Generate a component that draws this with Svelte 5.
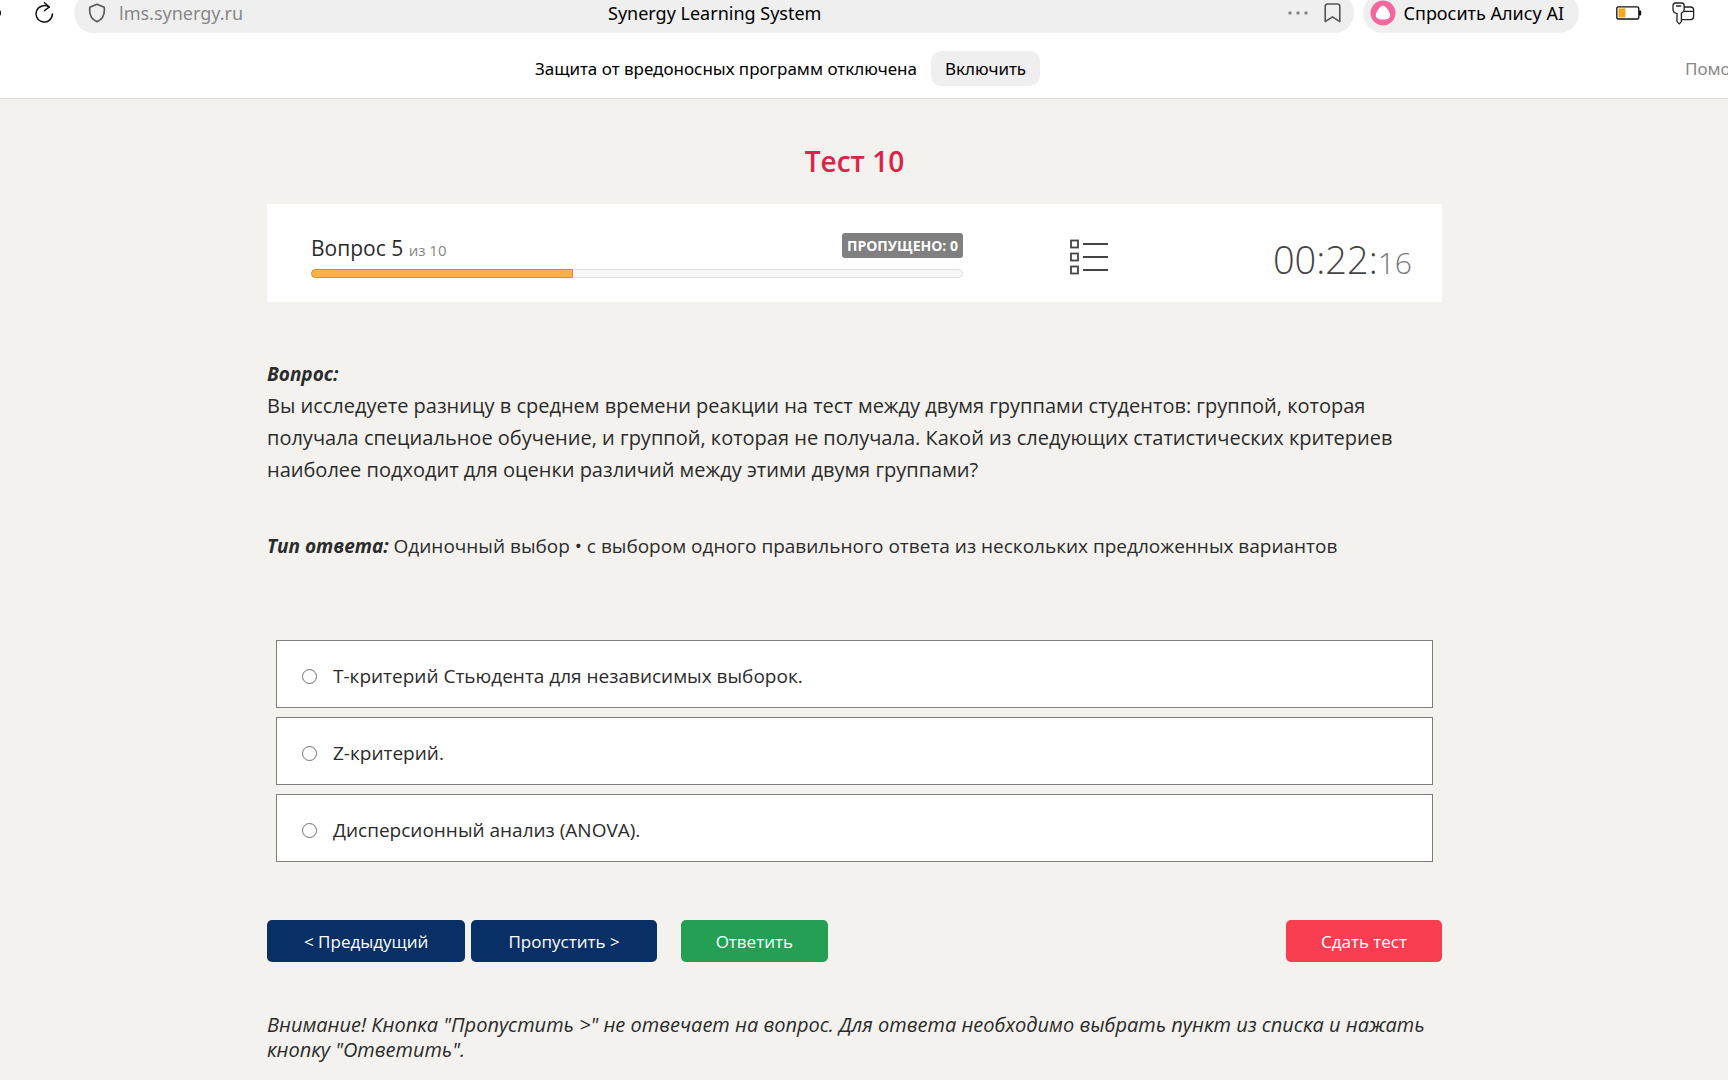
<script>
	let current = 5;
	let total = 10;
	let answered = 4;
	let skipped = 0;
	let selected = '';

	const answers = [
		{ id: 'a1', text: 'T-критерий Стьюдента для независимых выборок.' },
		{ id: 'a2', text: 'Z-критерий.' },
		{ id: 'a3', text: 'Дисперсионный анализ (ANOVA).' }
	];

	$: progress = (answered / total) * 100;
</script>

<header class="browser">
	<div class="toolbar">
		<button class="icon-button forward" aria-label="Вперёд">
			<svg width="4" height="12" viewBox="0 0 4 12"><circle cx="-3" cy="6" r="4" fill="#000" /></svg>
		</button>
		<button class="icon-button reload" aria-label="Обновить">
			<svg width="20" height="24" viewBox="0 0 20 24" fill="none" stroke="#111" stroke-width="1.5" stroke-linecap="round" stroke-linejoin="round">
				<path d="M18.4 13A8.2 8.2 0 1 1 15 6.2" />
				<path d="M10.5 1.8l4.8 4.2-4.8 3.6" />
			</svg>
		</button>
		<div class="address">
			<div class="site">
				<svg width="18" height="20" viewBox="0 0 18 20" fill="none" stroke="#555" stroke-width="1.6" stroke-linejoin="round">
					<path d="M9 1.2L16.2 4.3C17 11 14.5 16.5 9 18.8C3.5 16.5 1 11 1.8 4.3Z" />
				</svg>
				<a class="domain" href="#site">lms.synergy.ru</a>
			</div>
			<span class="page-title">Synergy Learning System</span>
			<div class="address-actions">
				<button class="icon-button" aria-label="Ещё">
					<svg width="20" height="4" viewBox="0 0 20 4" fill="#888">
						<circle cx="2" cy="2" r="1.8" />
						<circle cx="10" cy="2" r="1.8" />
						<circle cx="18" cy="2" r="1.8" />
					</svg>
				</button>
				<button class="icon-button" aria-label="Закладка">
					<svg width="17" height="20" viewBox="0 0 17 20" fill="none" stroke="#555" stroke-width="1.6" stroke-linejoin="round">
						<path d="M1.2 18.6V3.4Q1.2 1 3.6 1H13.4Q15.8 1 15.8 3.4V18.6L8.5 13.8Z" />
					</svg>
				</button>
			</div>
		</div>
		<button class="alice">
			<svg width="26" height="26" viewBox="0 0 26 26">
				<circle cx="13" cy="13" r="12.5" fill="#f4679d" />
				<path d="M13 5.6C15.6 5.6 20.2 12.6 20.2 15.4C20.2 18.2 16.6 19.6 13 19.6C9.4 19.6 5.8 18.2 5.8 15.4C5.8 12.6 10.4 5.6 13 5.6Z" fill="#fff" />
			</svg>
			Спросить Алису AI
		</button>
		<div class="extensions">
			<svg width="26" height="14" viewBox="0 0 26 14">
				<rect x="0.8" y="0.8" width="22" height="12.2" rx="1.6" fill="#fff" stroke="#111" stroke-width="1.3" />
				<rect x="2.4" y="2.4" width="7" height="9" fill="#f7a51c" />
				<path d="M23 4.5h1.2q1 0 1 1v3q0 1-1 1H23z" fill="#111" />
			</svg>
			<button class="icon-button" aria-label="Пароли">
				<svg width="23" height="23" viewBox="0 0 23 23" fill="none" stroke="#222" stroke-width="1.3" stroke-linejoin="round" stroke-linecap="round">
					<path d="M3.5 1H9.5Q12.2 1 12.2 3.8V7.5Q12.2 9.8 9.4 11.2V19.6L7.3 21.9L5 19.6V11.6Q1 10.6 1 7.2V3.8Q1 1 3.5 1Z" />
					<path d="M4.5 4H8.8" />
					<path d="M12.4 5H18.6Q21.6 5 21.6 8V14.5Q21.6 17.6 18.6 17.6H9.6" />
					<path d="M12.2 9.3H21.4" />
				</svg>
			</button>
		</div>
	</div>
	<div class="protection">
		<div class="protection-message">
			<span>Защита от вредоносных программ отключена</span>
			<button class="enable">Включить</button>
		</div>
		<a class="help" href="#help">Помощь</a>
	</div>
</header>

<main class="page">
	<h1>Тест 10</h1>

	<section class="panel">
		<div class="status">
			<div class="status-row">
				<span class="counter">Вопрос {current} <small>из {total}</small></span>
				<span class="badge">ПРОПУЩЕНО: {skipped}</span>
			</div>
			<div class="track">
				<div class="fill" style={`width: ${progress}%;`}></div>
			</div>
		</div>
		<button class="icon-button list" aria-label="Список вопросов">
			<svg width="40" height="36" viewBox="0 0 40 36" fill="none" stroke="#444">
				{#each [1, 14, 27] as y}
					<rect x="2" y={y + 0.5} width="7" height="7" stroke-width="1.8" />
					<path d={`M14 ${y + 4}H39`} stroke-width="2" />
				{/each}
			</svg>
		</button>
		<div class="timer">00:22:<small>16</small></div>
	</section>

	<section class="question">
		<strong>Вопрос:</strong>
		<p>
			Вы исследуете разницу в среднем времени реакции на тест между двумя группами студентов: группой,
			которая получала специальное обучение, и группой, которая не получала. Какой из следующих
			статистических критериев наиболее подходит для оценки различий между этими двумя группами?
		</p>
	</section>

	<p class="answer-type">
		<strong>Тип ответа:</strong> Одиночный выбор • с выбором одного правильного ответа из нескольких
		предложенных вариантов
	</p>

	<form class="answers">
		{#each answers as answer}
			<label class="answer" for={answer.id}>
				<input type="radio" name="answer" id={answer.id} value={answer.id} bind:group={selected} />
				<span>{answer.text}</span>
			</label>
		{/each}
	</form>

	<div class="actions">
		<button class="btn navy">&lt; Предыдущий</button>
		<button class="btn navy">Пропустить &gt;</button>
		<button class="btn green">Ответить</button>
		<button class="btn red">Сдать тест</button>
	</div>

	<p class="note">
		Внимание! Кнопка "Пропустить &gt;" не отвечает на вопрос. Для ответа необходимо выбрать пункт из
		списка и нажать кнопку "Ответить".
	</p>
</main>

<style>
	:global(body) {
		background: #f3f2ee;
		color: #2b2b2b;
		font-family: 'Open Sans', 'Noto Sans', sans-serif;
		overflow: hidden;
	}

	button {
		font-family: inherit;
		border: 0;
		cursor: pointer;
	}
	.icon-button {
		display: flex;
		padding: 0;
		background: none;
	}

	/* browser chrome */
	.browser {
		height: 98px;
		background: #fff;
		border-bottom: 1px solid #d9d8d5;
		overflow: hidden;
		color: #000;
		font-family: 'Noto Sans', sans-serif;
	}
	.toolbar {
		display: flex;
		align-items: center;
		height: 40px;
		margin-top: -7px;
	}
	.forward {
		width: 34px;
	}
	.reload {
		width: 40px;
	}
	.address {
		flex: 1;
		display: grid;
		grid-template-columns: 1fr auto 1fr;
		align-items: center;
		height: 40px;
		padding: 0 13px 0 14px;
		border-radius: 20px;
		background: #efefef;
	}
	.site {
		display: flex;
		align-items: center;
		gap: 13px;
	}
	.domain {
		color: #888;
		font-size: 18px;
		text-decoration: none;
	}
	.page-title {
		font-size: 18px;
	}
	.address-actions {
		display: flex;
		align-items: center;
		justify-content: flex-end;
		gap: 16px;
	}
	.alice {
		display: flex;
		align-items: center;
		gap: 7px;
		height: 40px;
		margin-left: 9px;
		padding: 0 15px 0 7px;
		border-radius: 20px;
		background: #efefef;
		color: #000;
		font-size: 18px;
		white-space: nowrap;
	}
	.extensions {
		display: flex;
		align-items: center;
		gap: 30px;
		padding: 0 33px 0 37px;
	}
	.protection {
		display: flex;
		align-items: center;
		height: 71px;
		font-size: 17px;
	}
	.protection-message {
		flex: 1;
		display: flex;
		align-items: center;
		justify-content: center;
		gap: 14px;
		padding-right: 110px;
	}
	.enable {
		height: 35px;
		padding: 0 14px;
		border-radius: 10px;
		background: #efefef;
		color: #000;
		font-size: 17px;
	}
	.help {
		width: 43px;
		overflow: hidden;
		color: #888;
		text-decoration: none;
	}

	/* test page */
	.page {
		width: 68%;
		margin: 0 auto;
		padding-right: 19px;
	}
	h1 {
		margin: 0;
		padding: 41px 0 22px;
		color: #dc2348;
		font-size: 28px;
		font-weight: 600;
		line-height: 42px;
		text-align: center;
	}
	.panel {
		box-sizing: border-box;
		display: grid;
		grid-template-columns: 652fr 252fr 197fr;
		align-items: center;
		height: 98px;
		padding: 8px 30px 0 44px;
		background: #fff;
	}
	.status {
		padding-bottom: 4px;
	}
	.status-row {
		display: flex;
		align-items: flex-start;
		justify-content: space-between;
		margin-bottom: 4px;
	}
	.counter {
		font-size: 21px;
		line-height: 30px;
	}
	.counter small {
		color: #888;
		font-size: 15px;
	}
	.badge {
		padding: 0 5px;
		border-radius: 3px;
		background: #808080;
		color: #fff;
		font-size: 14px;
		font-weight: 700;
		line-height: 25px;
	}
	.track {
		height: 7px;
		border: 1px solid #ddd;
		border-radius: 5px;
		background: #f7f7f7;
	}
	.fill {
		height: 7px;
		margin: -1px;
		border: 1px solid #d0932c;
		border-radius: 5px 0 0 5px;
		background: #f9b248;
	}
	.list {
		justify-self: center;
	}
	.timer {
		justify-self: end;
		padding-top: 4px;
		color: #444;
		font-size: 38px;
		font-weight: 300;
	}
	.timer small {
		color: #777;
		font-size: 30px;
	}
	strong {
		font-size: 19px;
		font-style: italic;
	}
	.question {
		padding-top: 56px;
	}
	.question strong {
		line-height: 32px;
	}
	.question p {
		margin: 0;
		font-size: 20px;
		line-height: 32px;
	}
	.answer-type {
		margin: 44px 0 78px;
		font-size: 19px;
		line-height: 32px;
	}
	.answers {
		display: flex;
		flex-direction: column;
		gap: 9px;
		padding: 0 9px;
	}
	.answer {
		display: flex;
		align-items: center;
		gap: 16px;
		padding: 22px 25px 18px;
		border: 1px solid #7d7d7d;
		background: #fff;
		font-size: 19px;
		line-height: 26px;
	}
	.answer input {
		appearance: none;
		width: 15px;
		height: 15px;
		margin: 0;
		border: 1px solid #707070;
		border-radius: 50%;
		background: #fff;
	}
	.answer input:checked {
		border: 4px solid #0a2f66;
	}
	.actions {
		display: flex;
		gap: 6px;
		padding: 58px 0 50px;
	}
	.btn {
		height: 42px;
		padding: 0 37px;
		border-radius: 5px;
		color: #fff;
		font-size: 17px;
		white-space: nowrap;
	}
	.navy {
		background: #082f66;
	}
	.green {
		margin-left: 18px;
		padding: 0 35px;
		background: #259f54;
	}
	.red {
		margin-left: auto;
		padding: 0 35px;
		background: #f93e52;
	}
	.note {
		margin: 0;
		font-size: 20px;
		font-style: italic;
		line-height: 25px;
	}
</style>
